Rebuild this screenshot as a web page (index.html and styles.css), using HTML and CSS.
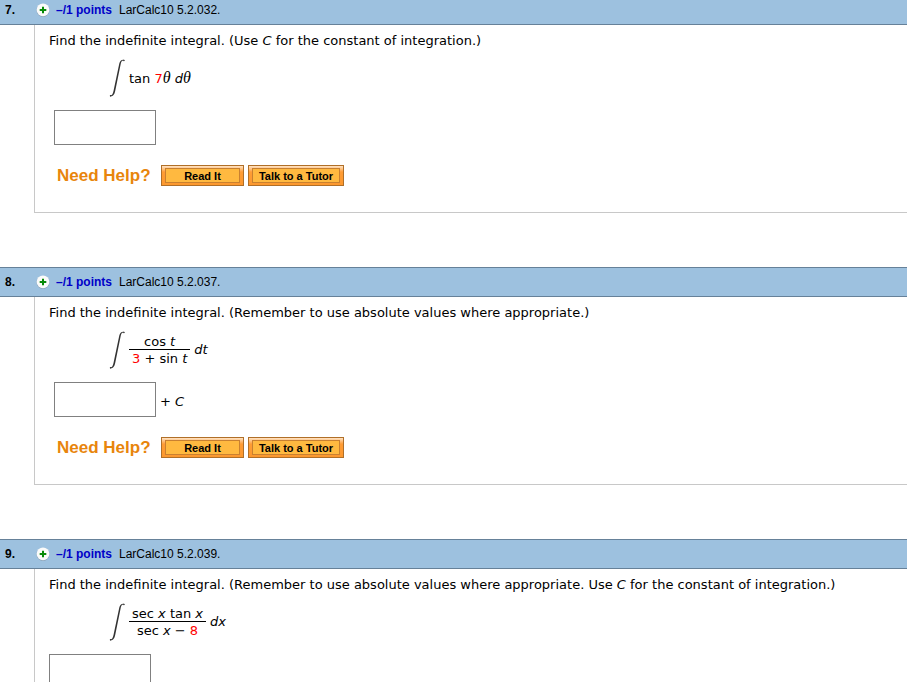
FILE: index.html
```
<!DOCTYPE html>
<html lang="en">

<head>
    <meta charset="utf-8">
    <meta name="viewport" content="width=device-width, initial-scale=1.0">
    <title>Assignment 5.2</title>

    <link rel="stylesheet" href="styles.css">
</head>

<body>
    <!-- shared icons -->
    <svg class="sprite" aria-hidden="true">
        <symbol id="plus" viewBox="0 0 14 14">
            <circle cx="7" cy="7.4" r="6.5" fill="#8ba3b8" />
            <circle cx="7" cy="6.8" r="6.4" fill="#fbfbfa" />
            <path d="M7 3.7v6.6M3.7 7h6.6" stroke="#078a07" stroke-width="2" fill="none" />
        </symbol>
        <symbol id="integral" viewBox="0 0 16 38">
            <path d="M15.2 1.7C13.4 1 12.4 2 11.8 4.6L6.3 31.5C5.6 35 4.4 37.4 1.2 37.4L1 36.6C3 36.6 3.8 35 4.5 32L10.3 4.6C11 1.6 12.6 .4 15.4 .9Z" fill="#333" />
            <circle cx="1.6" cy="36.8" r=".8" fill="#333" />
            <circle cx="14.9" cy="1.5" r=".7" fill="#333" />
        </symbol>
    </svg>

    <main class="assignment">
        <section class="question">
            <header class="question-head">
                <span class="number">7.</span>
                <svg class="plus"><use href="#plus" /></svg>
                <a class="points" href="#">–/1 points</a>
                <span class="source">LarCalc10 5.2.032.</span>
            </header>
            <div class="question-body">
                <p class="prompt" id="q7">Find the indefinite integral. (Use <i>C</i> for the constant of integration.)</p>
                <div class="formula">
                    <svg class="integral"><use href="#integral" /></svg>
                    <span>tan <span class="value">7</span><i class="theta">θ</i> <i>d</i><i class="theta">θ</i></span>
                </div>
                <div class="answer">
                    <input type="text" class="answer-box" aria-labelledby="q7">
                </div>
                <div class="help">
                    <span class="help-title">Need Help?</span>
                    <button type="button" class="help-button read">Read It</button>
                    <button type="button" class="help-button tutor">Talk to a Tutor</button>
                </div>
            </div>
        </section>

        <section class="question">
            <header class="question-head">
                <span class="number">8.</span>
                <svg class="plus"><use href="#plus" /></svg>
                <a class="points" href="#">–/1 points</a>
                <span class="source">LarCalc10 5.2.037.</span>
            </header>
            <div class="question-body">
                <p class="prompt" id="q8">Find the indefinite integral. (Remember to use absolute values where appropriate.)</p>
                <div class="formula">
                    <svg class="integral"><use href="#integral" /></svg>
                    <span class="fraction">
                        <span class="top">cos <i>t</i></span>
                        <span class="bottom"><span class="value">3</span> + sin <i>t</i></span>
                    </span>
                    <i>dt</i>
                </div>
                <div class="answer">
                    <input type="text" class="answer-box" aria-labelledby="q8">
                    <span class="constant">+ <i>C</i></span>
                </div>
                <div class="help">
                    <span class="help-title">Need Help?</span>
                    <button type="button" class="help-button read">Read It</button>
                    <button type="button" class="help-button tutor">Talk to a Tutor</button>
                </div>
            </div>
        </section>

        <section class="question">
            <header class="question-head">
                <span class="number">9.</span>
                <svg class="plus"><use href="#plus" /></svg>
                <a class="points" href="#">–/1 points</a>
                <span class="source">LarCalc10 5.2.039.</span>
            </header>
            <div class="question-body">
                <p class="prompt" id="q9">Find the indefinite integral. (Remember to use absolute values where appropriate. Use <i>C</i> for the constant of integration.)</p>
                <div class="formula">
                    <svg class="integral"><use href="#integral" /></svg>
                    <span class="fraction">
                        <span class="top">sec <i>x</i> tan <i>x</i></span>
                        <span class="bottom">sec <i>x</i> − <span class="value">8</span></span>
                    </span>
                    <i>dx</i>
                </div>
                <div class="answer flush">
                    <input type="text" class="answer-box" aria-labelledby="q9">
                </div>
            </div>
        </section>
    </main>
</body>

</html>
```
FILE: styles.css
```
html,
body {
    height: 100%;
}

body {
    margin: 0;
    overflow: hidden;
    background: #fff;
    color: #000;
    font-family: Verdana, 'DejaVu Sans', sans-serif;
    font-size: 13px;
    line-height: 16px;
}

.sprite {
    display: none;
}

/* first header is partly scrolled off the top */
.assignment {
    margin-top: -5px;
}

.question {
    margin-bottom: 54px;
}

.question-head {
    display: flex;
    align-items: center;
    box-sizing: border-box;
    height: 30px;
    padding-left: 5px;
    background: #9dc1df;
    border-top: 1px solid #668199;
    border-bottom: 1px solid #668199;
    font-family: 'Liberation Sans', Arial, sans-serif;
    font-size: 12px;
}

.number {
    width: 31px;
    font-weight: bold;
}

.plus {
    width: 14px;
    height: 14px;
    margin-right: 6px;
}

.points {
    margin-right: 7px;
    color: #0000c8;
    font-weight: bold;
    text-decoration: none;
}

.question-body {
    margin-left: 34px;
    padding: 8px 14px 26px;
    border-left: 1px solid #c8c8c8;
    border-bottom: 1px solid #c8c8c8;
}

.prompt {
    margin: 0;
}

.formula {
    display: flex;
    align-items: center;
    gap: 4px;
    height: 38px;
    margin: 10px 0 13px 60px;
}

.integral {
    width: 16px;
    height: 38px;
}

.value {
    color: #f00;
}

.theta {
    font-family: 'Liberation Serif', 'Times New Roman', serif;
    font-size: 16px;
    line-height: 16px;
}

.fraction {
    display: flex;
    flex-direction: column;
    text-align: center;
}

.top {
    padding: 0 3px;
    border-bottom: 1px solid #000;
    line-height: 15px;
}

.bottom {
    padding: 0 3px;
    line-height: 17px;
}

.answer {
    display: flex;
    align-items: center;
    gap: 4px;
    padding-left: 5px;
}

.answer.flush {
    padding-left: 0;
}

.answer-box {
    box-sizing: border-box;
    width: 102px;
    height: 35px;
    padding: 2px 4px;
    background: #fff;
    border: 1px solid #808080;
    font: inherit;
}

.constant {
    padding-top: 4px;
}

.help {
    display: flex;
    align-items: center;
    gap: 4px;
    margin-top: 20px;
    padding-left: 8px;
}

.help-title {
    width: 100px;
    color: #e8850c;
    font-family: 'Liberation Sans', Arial, sans-serif;
    font-size: 17px;
    font-weight: bold;
    line-height: 20px;
}

/* inner plate drawn over the orange bevel */
.help-button {
    height: 21px;
    padding: 3px 3px 1px;
    background:
        linear-gradient(#ffb940, #ffb940) center / calc(100% - 8px) 13px no-repeat,
        linear-gradient(#c98030, #c98030) center / calc(100% - 6px) 15px no-repeat,
        linear-gradient(#ffe3c4, #ff9c35 6px, #fc982e);
    border: 1px solid #b06f28;
    font-family: 'Liberation Sans', Arial, sans-serif;
    font-size: 11px;
    font-weight: bold;
    line-height: 15px;
    cursor: pointer;
}

.read {
    width: 83px;
}

.tutor {
    width: 96px;
}
```
